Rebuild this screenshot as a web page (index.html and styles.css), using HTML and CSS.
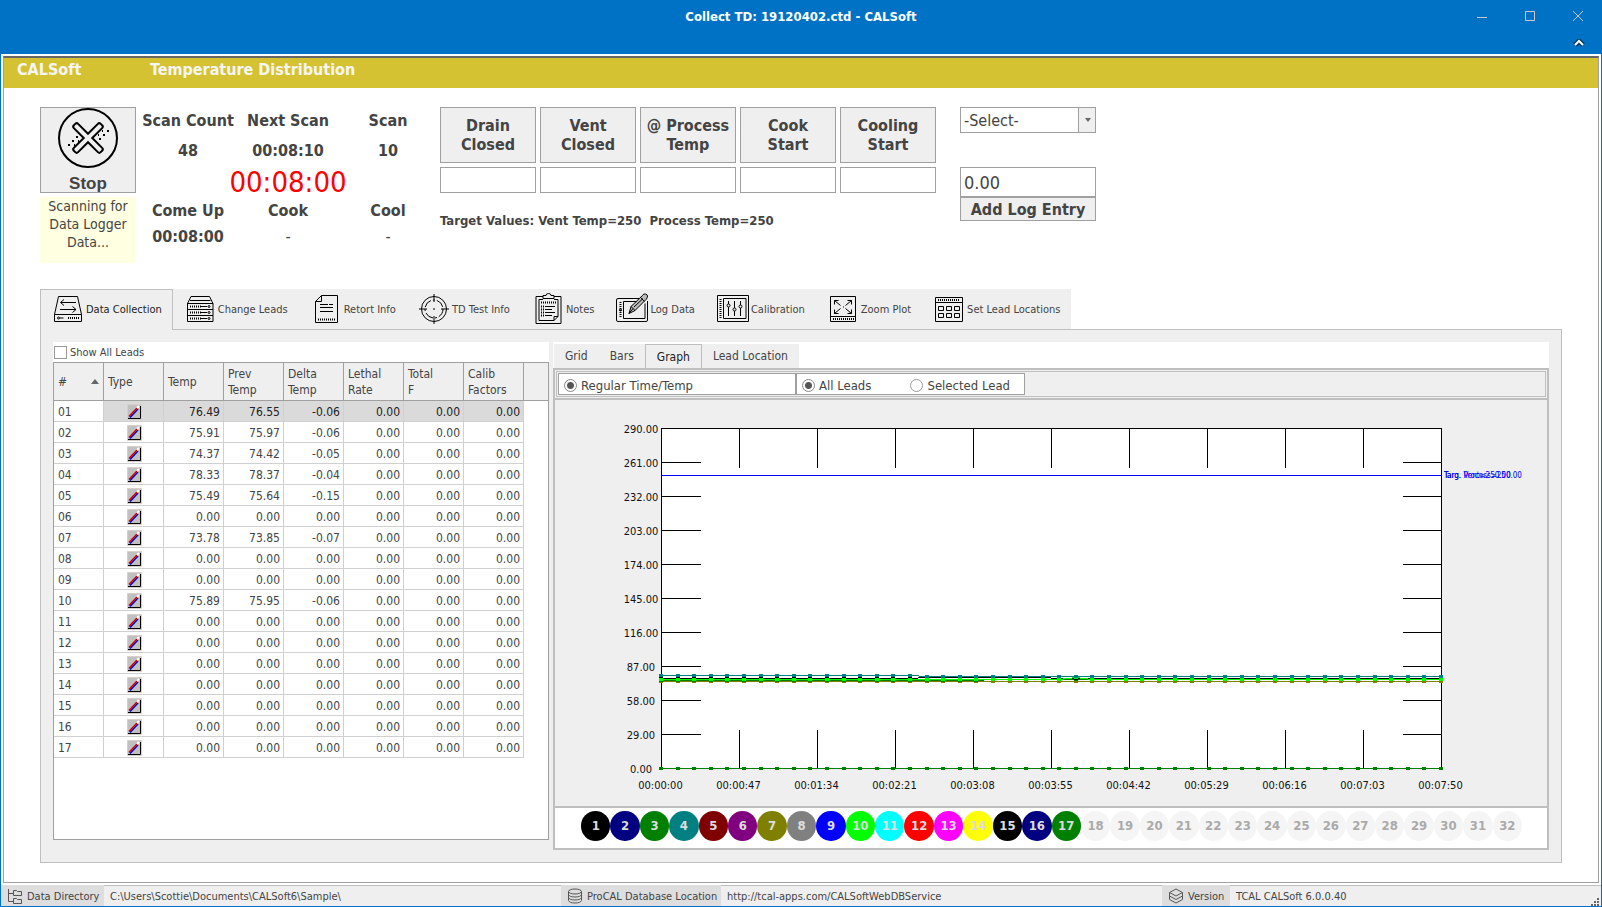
FILE: index.html
```html
<!DOCTYPE html>
<html lang="en">
<head>
    <meta charset="UTF-8">
    <title>Collect TD: 19120402.ctd - CALSoft</title>
    <meta name="viewport" content="width=device-width, initial-scale=1.0">
    <link rel="stylesheet" href="styles.css">
</head>
<body>

<header class="titlebar">
    <h1>Collect TD: 19120402.ctd - CALSoft</h1>
    <div class="window-buttons">
        <button type="button" aria-label="Minimize"><svg width="12" height="12" viewBox="0 0 12 12"><path d="M1 7.500h10"/></svg></button>
        <button type="button" aria-label="Maximize"><svg width="12" height="12" viewBox="0 0 12 12"><path d="M1.500 1.500h9v9h-9z"/></svg></button>
        <button type="button" aria-label="Close"><svg width="12" height="12" viewBox="0 0 12 12"><path d="M1 1l10 10M11 1L1 11"/></svg></button>
    </div>
    <button type="button" class="collapse" aria-label="Collapse ribbon"><svg width="12" height="8" viewBox="0 0 12 8"><path class="shade" d="M2 6l4-4 4 4"/><path class="line" d="M2 6l4-4 4 4"/></svg></button>
</header>

<main class="workspace">
    <div class="banner">
        <span class="banner-app">CALSoft</span>
        <span>Temperature Distribution</span>
    </div>

    <section class="controls">
        <div class="stop-col">
            <button type="button" class="btn stop-btn">
                <svg width="60" height="60" viewBox="0 0 60 60">
                    <circle cx="30" cy="30" r="29"/>
                    <path transform="translate(30 30) rotate(45)" d="M-3-3V-17q0-2 2-2h2q2 0 2 2V-3H17q2 0 2 2v2q0 2-2 2H3V17q0 2-2 2h-2q-2 0-2-2V3H-17q-2 0-2-2v-2q0-2 2-2z"/>
                    <path d="M49 23h2M45 27h2M41 31h2M44 23h1M40 27h1M10 37h2M14 33h2M18 29h2M16 37h1M20 33h1"/>
                </svg>
                <span>Stop</span>
            </button>
            <div class="status-note">Scanning for Data Logger Data...</div>
        </div>

        <div class="stats">
            <b>Scan Count</b><b>Next Scan</b><b>Scan</b>
            <b>48</b><b>00:08:10</b><b>10</b>
            <span class="elapsed">00:08:00</span>
            <b>Come Up</b><b>Cook</b><b>Cool</b>
            <b>00:08:00</b><span>-</span><span>-</span>
        </div>

        <div class="events">
            <button type="button" class="btn">Drain Closed</button>
            <button type="button" class="btn">Vent Closed</button>
            <button type="button" class="btn">@ Process Temp</button>
            <button type="button" class="btn">Cook<br>Start</button>
            <button type="button" class="btn">Cooling Start</button>
            <input type="text" aria-label="Drain closed time">
            <input type="text" aria-label="Vent closed time">
            <input type="text" aria-label="Process temp time">
            <input type="text" aria-label="Cook start time">
            <input type="text" aria-label="Cooling start time">
            <p class="targets">Target Values: Vent Temp=250 &nbsp;Process Temp=250</p>
        </div>

        <div class="log-entry">
            <div class="select-wrap">
                <select aria-label="Log entry type"><option>-Select-</option></select>
            </div>
            <input type="text" value="0.00" aria-label="Log entry value">
            <button type="button" class="btn">Add Log Entry</button>
        </div>
    </section>

    <nav class="main-tabs">
        <button type="button" class="active">
            <svg viewBox="0 0 32 32"><path d="M2.500 21.500L6.500 3.500h19l4 18v7h-27zM2.500 21.500h27M9 9.500h15M12 6.500l-3.500 3 3.500 3M8 16.500h16M20.500 13.500l3.500 3-3.500 3"/><circle cx="6.500" cy="25" r="1"/><path d="M7.500 25h4"/><path class="dot" d="M16 25h12"/></svg>
            Data Collection</button>
        <button type="button">
            <svg viewBox="0 0 32 32"><path d="M3.500 10.500l3.500-7h18.500l3.500 7zM6 7.500h20.500M3.500 10.500h25.500v6h-25.500zM3.500 16.500h25.500v6h-25.500zM3.500 22.500h25.500v6h-25.500zM17 13.500h6M17 19.500h6M17 25.500h6"/><path class="dot" d="M6 13.500h11M6 19.500h11M6 25.500h11"/><circle cx="25" cy="13.500" r="1"/><circle cx="25" cy="19.500" r="1"/><circle cx="25" cy="25.500" r="1"/></svg>
            Change Leads</button>
        <button type="button">
            <svg viewBox="0 0 32 32"><path d="M11.500 2.500h16v27h-22v-21zM11.500 2.500v6h-6M10 11.500h8M19 11.500h4M10 14.500h13M10 18.500h13"/><path class="dot" d="M8 26.500h17"/></svg>
            Retort Info</button>
        <button type="button">
            <svg viewBox="0 0 32 32"><circle cx="16" cy="16" r="12.500"/><circle cx="16" cy="16" r="9" stroke-dasharray="9 2 2 2"/><path d="M16 1v8M16 23v8M1 16h8M23 16h8"/><path class="dot" d="M15.500 16h1"/></svg>
            TD Test Info</button>
        <button type="button">
            <svg viewBox="0 0 32 32"><path d="M11 3.500H4v27h25v-27h-7M11 5.500v-3h3q0-2 2.500-2t2.500 2h3v3zM11 6.500H7v21h15l4-4v-17h-4M22 27.500v-4h4M13 13.500h10M13 16.500h7M13 19.500h10M13 22.500h7"/><path class="dot" d="M9 9.500h15M9 13.500h3M9 16.500h3M9 19.500h3M9 22.500h3"/></svg>
            Notes</button>
        <button type="button">
            <svg viewBox="0 0 32 32"><path d="M23 5.500H2q-1.500 0-1.500 1.500v20q0 1.500 1.500 1.500h28q1.500 0 1.500-1.500V8M22 8.500H7.500v17h21.500v-15"/><path class="dot" d="M4.500 9v16"/><circle cx="4.500" cy="17" r="1"/><path class="fill" d="M13 20.500l2-7L26.500 2.500q1-2 3-1.500t2 2-1 3L19 17.500z"/><path d="M15 13.500l4 4M13 20.500l4-5M24.500 4.500l4 4M18 14L27 5.500"/></svg>
            Log Data</button>
        <button type="button">
            <svg viewBox="0 0 32 32"><path d="M.5 2.500h31v26H.5zM6.500 5.500h22.500v20H6.500zM11.500 8v3M11.500 14v9M17.500 8v7M17.500 18v5M23.500 8v4M23.500 15v8"/><circle cx="11.500" cy="12.500" r="1.500"/><circle cx="17.500" cy="16.500" r="1.500"/><circle cx="23.500" cy="13.500" r="1.500"/><path class="dot" d="M3.500 6v20"/></svg>
            Calibration</button>
        <button type="button">
            <svg viewBox="0 0 32 32"><path d="M3.500 3.500h25v25h-25zM3.500 23.500h25M7.500 11.500v-4h4M20.500 7.500h4v4M7.500 16.500v4h4M20.500 20.500h4v-4M7.500 7.500l6 5M24.500 7.500l-6 5M7.500 20.500l6-5M24.500 20.500l-6-5M16 14h1"/><path class="dot" d="M6 26h21"/></svg>
            Zoom Plot</button>
        <button type="button">
            <svg viewBox="0 0 32 32"><path d="M2.500 4.500h27v24h-27zM2.500 9.500h27M5.500 13.500h5v4h-5zM13.500 13.500h5v4h-5zM21.500 13.500h5v4h-5zM5.500 20.500h5v4h-5zM13.500 20.500h5v4h-5zM21.500 20.500h5v4h-5z"/><path class="dot" d="M5 7h22"/></svg>
            Set Lead Locations</button>
    </nav>

    <section class="tab-page">
        <div class="leads">
            <div class="show-all">
                <input type="checkbox" id="showAll">
                <label for="showAll">Show All Leads</label>
            </div>
            <div class="grid-box">
                <table class="leads-table">
                    <thead>
                        <tr>
                            <th class="num">#<i class="sort"></i></th>
                            <th>Type</th>
                            <th>Temp</th>
                            <th>Prev<br>Temp</th>
                            <th>Delta<br>Temp</th>
                            <th>Lethal<br>Rate</th>
                            <th>Total<br>F</th>
                            <th>Calib<br>Factors</th>
                            <th class="filler"></th>
                        </tr>
                    </thead>
                    <tbody id="leadRows"></tbody>
                </table>
            </div>
        </div>

        <div class="plots">
            <nav class="sub-tabs">
                <button type="button">Grid</button>
                <button type="button">Bars</button>
                <button type="button" class="active">Graph</button>
                <button type="button">Lead Location</button>
            </nav>
            <div class="plot-panel">
                <div class="options">
                    <div class="option-box mode">
                        <label><input type="radio" name="mode" checked>Regular Time/Temp</label>
                    </div>
                    <div class="option-box which">
                        <label><input type="radio" name="which" checked>All Leads</label>
                        <label><input type="radio" name="which">Selected Lead</label>
                    </div>
                </div>
                <svg class="chart" id="chart" viewBox="0 0 992 406"></svg>
                <div class="legend" id="legend"></div>
            </div>
        </div>
    </section>
</main>

<footer class="statusbar">
    <span class="label">
        <svg viewBox="0 0 16 16"><path d="M1.500 1v12.500h5M1.500 5.500h5M6.500 2.500h3l1 1h4v4h-8zM6.500 10.500h3l1 1h4v4h-8z"/></svg>
        Data Directory</span>
    <span class="value">C:\Users\Scottie\Documents\CALSoft6\Sample\</span>
    <span class="label">
        <svg viewBox="0 0 16 16"><ellipse cx="8" cy="3.500" rx="6.500" ry="2.500"/><path d="M1.500 3.500v9q1 2.500 6.500 2.500t6.500-2.500v-9M1.500 6.500q1 2.500 6.500 2.500t6.500-2.500M1.500 9.500q1 2.500 6.500 2.500t6.500-2.500"/></svg>
        ProCAL Database Location</span>
    <span class="value">http://tcal-apps.com/CALSoftWebDBService</span>
    <span class="label">
        <svg viewBox="0 0 16 16"><path d="M8 1l6.500 3.500L8 8 1.500 4.500zM1.500 4.500v7L8 15l6.500-3.500v-7M1.500 8L8 11.500 14.500 8"/></svg>
        Version</span>
    <span class="value">TCAL CALSoft 6.0.0.40
        <svg class="grip" viewBox="0 0 8 8"><path d="M6 0h2v2H6zM3 3h2v2H3zM6 3h2v2H6zM0 6h2v2H0zM3 6h2v2H3zM6 6h2v2H6z"/></svg>
    </span>
</footer>

<script src="app.js"></script>
</body>
</html>
```
FILE: styles.css
```css
* {
    box-sizing: border-box;
}

body {
    margin: 0;
    min-height: 100vh;
    display: flex;
    flex-direction: column;
    border: 1px solid #0072c6;
    border-top: none;
    background: #fff;
    color: #444;
    font-family: 'DejaVu Sans Condensed', 'DejaVu Sans', Tahoma, sans-serif;
    font-size: 12px;
}

button,
input,
select {
    font: inherit;
    color: inherit;
    margin: 0;
    border-radius: 0;
}

button {
    cursor: pointer;
}

svg {
    fill: none;
    flex: none;
}

/* Title bar */
.titlebar {
    position: relative;
    height: 54px;
    background: #0072c6;
    color: #fff;
}

.titlebar h1 {
    margin: 0;
    font-size: 13px;
    line-height: 34px;
    text-align: center;
}

.titlebar button {
    padding: 0;
    border: none;
    background: none;
    display: flex;
}

.window-buttons {
    position: absolute;
    top: 10px;
    right: 17px;
    display: flex;
    gap: 36px;
}

.window-buttons svg {
    stroke: #c8c8c8;
}

.collapse {
    position: absolute;
    top: 39px;
    right: 16px;
}

.collapse .shade {
    stroke: #06375c;
    stroke-width: 5;
}

.collapse .line {
    stroke: #fff;
    stroke-width: 2;
}

/* Work area */
.workspace {
    flex: 1;
    display: flex;
    flex-direction: column;
    margin: 2px;
    border: 1px solid #a0a0a0;
    border-top: 2px solid #666;
    padding-bottom: 19px;
}

.banner {
    display: flex;
    height: 30px;
    padding-left: 13px;
    background: #d4c232;
    color: #f5f5f5;
    font-size: 16px;
    font-weight: bold;
    line-height: 24px;
}

.banner-app {
    width: 133px;
}

.controls {
    display: flex;
    gap: 2px;
    padding: 19px 36px 26px;
    font-size: 16px;
}

.btn {
    border: 1px solid #a0a0a0;
    background: #efefef;
    padding: 0;
    font-size: 16px;
    font-weight: bold;
    line-height: 19px;
}

.controls input {
    width: 100%;
    border: 1px solid #a0a0a0;
    background: #fff;
    padding: 0 3px;
}

.stop-col {
    width: 96px;
}

.stop-btn {
    display: flex;
    flex-direction: column;
    align-items: center;
    gap: 6px;
    width: 96px;
    height: 86px;
    font-family: 'Liberation Sans', Arial, sans-serif;
    font-size: 17px;
}

.stop-btn svg {
    stroke: #000;
    stroke-width: 2;
}

.status-note {
    height: 66px;
    margin-top: 4px;
    padding: 0 4px;
    background: #ffffe1;
    font-size: 14px;
    line-height: 18px;
    text-align: center;
}

.stats {
    display: grid;
    grid-template-columns: repeat(3, 100px);
    grid-template-rows: 26px 34px 30px 26px 26px;
    align-content: start;
    align-items: center;
    text-align: center;
    white-space: nowrap;
}

.elapsed {
    grid-column: 1 / 4;
    color: #f00;
    font-size: 29px;
}

.events {
    display: grid;
    grid-template-columns: repeat(5, 96px);
    grid-template-rows: 56px 26px auto;
    gap: 4px;
    align-content: start;
}

.events .btn {
    padding: 0 4px;
}

.targets {
    grid-column: 1 / 6;
    margin: 16px 0 0;
    font-size: 13px;
    font-weight: bold;
}

.log-entry {
    width: 136px;
    margin-left: 22px;
    display: flex;
    flex-direction: column;
}

.select-wrap {
    position: relative;
    margin-bottom: 34px;
}

.select-wrap select {
    appearance: none;
    display: block;
    width: 100%;
    height: 26px;
    border: 1px solid #a0a0a0;
    background: #fff;
    padding: 0 3px;
    font-size: 16px;
}

.select-wrap::before {
    content: "";
    position: absolute;
    top: 1px;
    right: 1px;
    bottom: 1px;
    width: 16px;
    border-left: 1px solid #a0a0a0;
    background: #efefef;
    pointer-events: none;
}

.select-wrap::after {
    content: "";
    position: absolute;
    top: 11px;
    right: 5px;
    border: 3px solid transparent;
    border-top: 4px solid #666;
    pointer-events: none;
}

.log-entry input {
    height: 30px;
    font-size: 18px;
}

.log-entry .btn {
    height: 24px;
}

/* Main tabs */
.main-tabs {
    display: flex;
    align-self: flex-start;
    height: 40px;
    margin-left: 36px;
    background: #efefef;
}

.main-tabs button {
    display: flex;
    align-items: center;
    gap: 2px;
    height: 40px;
    padding: 0 11px;
    border: none;
    background: none;
    font-size: 11px;
    white-space: nowrap;
}

/* covers the top edge of the page below */
.main-tabs .active {
    position: relative;
    height: 41px;
    padding: 0 10px 2px 11px;
    border: 1px solid #bfbfbf;
    border-bottom: none;
    background: #efefef;
    color: #222;
}

.main-tabs svg {
    width: 32px;
    height: 32px;
    stroke: #000;
}

.main-tabs .dot {
    stroke-dasharray: 1 1;
    stroke-width: 2;
}

.main-tabs .fill {
    fill: #bbb;
}

.tab-page {
    flex: 1;
    display: flex;
    gap: 4px;
    margin: 0 36px;
    border: 1px solid #bfbfbf;
    padding: 12px;
    background: #efefef;
}

/* Leads grid */
.leads {
    display: flex;
    flex-direction: column;
    width: 496px;
    margin-bottom: 10px;
    background: #fff;
}

.show-all {
    display: flex;
    align-items: center;
    gap: 3px;
    height: 20px;
    font-size: 11px;
}

.show-all input {
    appearance: none;
    width: 13px;
    height: 13px;
    margin-left: 1px;
    border: 1px solid #999;
    background: #fff;
}

.grid-box {
    flex: 1;
    border: 1px solid #a0a0a0;
}

.leads-table {
    width: 100%;
    table-layout: fixed;
    border-collapse: separate;
    border-spacing: 0;
}

.leads-table th {
    width: 60px;
    height: 38px;
    padding: 0 4px;
    border-right: 1px solid #a0a0a0;
    border-bottom: 1px solid #a0a0a0;
    background: #efefef;
    font-weight: normal;
    line-height: 16px;
    text-align: left;
}

.leads-table .num {
    width: 50px;
}

.leads-table .filler {
    width: auto;
    border-right: none;
}

.sort {
    float: right;
    margin-top: 5px;
    border: 4px solid transparent;
    border-top: none;
    border-bottom: 5px solid #666;
}

.leads-table td {
    height: 21px;
    padding: 2px 3px 0 4px;
    border-right: 1px solid #d0d0d0;
    border-bottom: 1px solid #d0d0d0;
    line-height: 18px;
    text-align: right;
}

.leads-table td:first-child {
    text-align: left;
}

.leads-table td:nth-child(2) {
    text-align: center;
}

.leads-table td:last-child {
    border: none;
}

.leads-table .selected td:not(:first-child):not(:last-child) {
    background: #dadada;
    color: #222;
}

.leads-table svg {
    display: block;
    margin: 0 auto;
}

/* Plots */
.plots {
    flex: 1;
    display: flex;
    flex-direction: column;
    min-width: 0;
    background: #fff;
}

.sub-tabs {
    display: flex;
    align-self: flex-start;
    margin: 2px 0 0 1px;
    background: #efefef;
}

.sub-tabs button {
    height: 24px;
    padding: 0 11px;
    border: none;
    background: none;
    font-size: 12px;
}

.sub-tabs .active {
    border: 1px solid #bfbfbf;
    border-bottom: none;
    color: #222;
}

.plot-panel {
    flex: 1;
    display: flex;
    flex-direction: column;
    border: 2px solid #bfbfbf;
    background: #efefef;
}

.options {
    display: flex;
    margin: 1px;
    border: 1px solid #bfbfbf;
    padding: 1px;
}

.option-box {
    display: flex;
    height: 22px;
    border: 1px solid #a0a0a0;
    padding: 2px 0 0 5px;
    background: #fff;
    font-size: 13px;
}

.mode {
    width: 238px;
}

.which {
    width: 229px;
    justify-content: space-between;
    padding-right: 14px;
}

.option-box label {
    display: flex;
    align-items: center;
    gap: 4px;
}

.option-box input {
    appearance: none;
    width: 13px;
    height: 13px;
    border: 1px solid #999;
    border-radius: 50%;
    background: #fff;
}

.option-box input:checked {
    border-color: #888;
    background: radial-gradient(circle, #555 3px, #fff 4px);
}

.chart {
    flex: 1;
    width: 100%;
    border-top: 2px solid #bfbfbf;
    border-bottom: 2px solid #bfbfbf;
    font-size: 11px;
}

.chart path {
    shape-rendering: crispEdges;
}

.chart text {
    fill: #111;
    text-anchor: middle;
}

.chart .target {
    fill: #00f;
    font-size: 8px;
    text-anchor: start;
}

.chart .axis {
    stroke: #000;
}

.legend {
    display: flex;
    height: 40px;
    padding: 3px 25px 0 26px;
    background: #fff;
}

.legend span {
    flex: 1;
    height: 30px;
    border-radius: 50%;
    background: #f5f5f5;
    color: #aaa;
    font-size: 13px;
    font-weight: bold;
    line-height: 30px;
    text-align: center;
}

.legend .on {
    color: #ddd;
}

/* Status bar */
.statusbar {
    display: grid;
    grid-template-columns: 103px 457fr 160px 441fr 68px 371fr;
    height: 21px;
    background: #efefef;
    font-size: 11px;
    line-height: 21px;
    white-space: nowrap;
}

.statusbar .label {
    display: flex;
    align-items: center;
    gap: 4px;
    padding-left: 6px;
    background: #dedede;
}

.statusbar .value {
    position: relative;
    padding-left: 6px;
    border-top: 1px solid #bfbfbf;
}

.statusbar svg {
    width: 16px;
    height: 16px;
    stroke: #555;
}

.statusbar .grip {
    position: absolute;
    right: 2px;
    bottom: 1px;
    width: 8px;
    height: 8px;
    fill: #666;
    stroke: none;
}
```
FILE: app.js
```js
const leads = [
    [76.49, 76.55], [75.91, 75.97], [74.37, 74.42], [78.33, 78.37], [75.49, 75.64],
    [0, 0], [73.78, 73.85], [0, 0], [0, 0], [75.89, 75.95], [0, 0], [0, 0],
    [0, 0], [0, 0], [0, 0], [0, 0], [0, 0]
];

const colors = ['#000', '#000080', '#008000', '#008080', '#800000', '#800080', '#808000', '#808080',
    '#00f', '#0f0', '#0ff', '#f00', '#f0f', '#ff0', '#000', '#000080', '#008000'];

// Leads table
const typeIcon = '<svg width="15" height="16" viewBox="0 0 15 16">' +
    '<path fill="#c0c0c0" stroke="#d8d0c8" d="M.5.5h14v15H.5z"/>' +
    '<path stroke="#000" d="M1 14.500h12.500V2"/>' +
    '<path stroke="#00c" stroke-width="1.500" d="M3 13.500L11 5"/>' +
    '<path stroke="#c00" stroke-width="1.500" d="M2 12.500L10 4"/>' +
    '<path stroke="#fff" stroke-width="2" d="M10 4l2-2"/></svg>';

document.getElementById('leadRows').innerHTML = leads.map(([temp, prev], i) => {
    const num = String(i + 1).padStart(2, '0');
    const values = [temp, prev, temp - prev, 0, 0, 0];
    return `<tr class="${i === 0 ? 'selected' : ''}"><td>${num}</td><td>${typeIcon}</td>` +
        values.map(v => `<td>${v.toFixed(2)}</td>`).join('') + '<td></td></tr>';
}).join('');

// Chart
const left = 106.5, top_ = 28.5, width = 780, height = 340;
const right = left + width, bottom = top_ + height;
const times = ['00:00:00', '00:00:47', '00:01:34', '00:02:21', '00:03:08', '00:03:55',
    '00:04:42', '00:05:29', '00:06:16', '00:07:03', '00:07:50'];
let axis = `M${left} ${top_}h${width}v${height}h-${width}z`;
let svg = `<rect x="${left}" y="${top_}" width="${width}" height="${height}" fill="#fff"/>`;

for (let i = 0; i <= 10; i++) {
    const x = left + i * 78;
    const y = top_ + i * 34;
    if (i > 0 && i < 10) {
        axis += `M${x} ${top_}v39M${x} ${bottom}v-39M${left} ${y}h39M${right} ${y}h-39`;
    }
    svg += `<text x="${x - 1}" y="389">${times[i]}</text>`;
    svg += `<text x="86" y="${y + 4}">${(290 - i * 29).toFixed(2)}</text>`;
}
svg += `<path class="axis" d="${axis}"/>`;
svg += `<path stroke="#00f" d="M${left} 75.5h${width}"/>`;
svg += '<text class="target" x="889" y="78">Targ. Vent=250.00</text>';
svg += '<text class="target" x="889" y="78">Targ. Process=250.00</text>';

// 48 scans per lead, y given for each scan
function series(color, yAt) {
    let line = '', marks = '';
    for (let i = 0; i < 48; i++) {
        const x = Math.floor(left + i * width / 47);
        const y = yAt(i);
        line += (i ? 'L' : 'M') + x + ' ' + y;
        marks += `M${x - 2} ${y}h4`;
    }
    return `<path stroke="${color}" d="${line}"/><path stroke="${color}" stroke-width="3" d="${marks}"/>`;
}

svg += series('#808000', () => 281.5);
svg += series('#800000', () => 279.5);
svg += series('#008000', i => i < 20 ? 280.5 : 279.5);
svg += series('#000', i => i > 15 && i < 24 ? 277.5 : 278.5);
svg += series('#0f0', i => i === 25 ? 277.5 : 279.5);
svg += series('#008080', i => i < 16 ? 275.5 : 276.5);
svg += series('#008000', () => bottom);
document.getElementById('chart').innerHTML = svg;

// Lead buttons under the chart
let legend = '';
for (let i = 0; i < 32; i++) {
    legend += i < colors.length
        ? `<span class="on" style="background: ${colors[i]}">${i + 1}</span>`
        : `<span>${i + 1}</span>`;
}
document.getElementById('legend').innerHTML = legend;
```
